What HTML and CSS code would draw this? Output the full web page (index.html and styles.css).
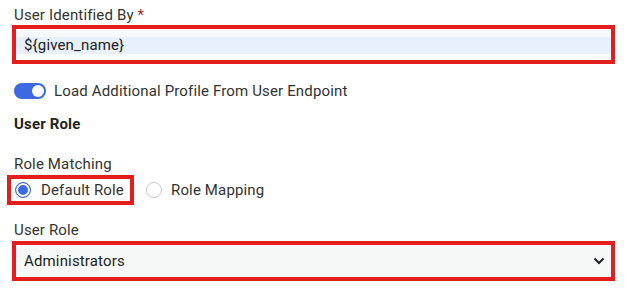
FILE: index.html
```html
<!DOCTYPE html>
<html>
<head>
<meta charset="utf-8">
<link rel="stylesheet" href="styles.css">
</head>
<body>
<div class="page">
  <div class="label">User Identified By <span class="req">*</span></div>
  <div class="hl box-input">
    <div class="input-top"></div>
    <div class="input-fill">${given_name}</div>
    <div class="input-bottom"></div>
  </div>

  <div class="toggle-row">
    <span class="toggle"><span class="knob"></span></span>
    <span>Load Additional Profile From User Endpoint</span>
  </div>

  <div class="section">User Role</div>

  <div class="label match-label">Role Matching</div>
  <div class="radio-row">
    <div class="hl radio-box">
      <span class="radio checked"></span>
      <span>Default Role</span>
    </div>
    <div class="radio-opt">
      <span class="radio"></span>
      <span>Role Mapping</span>
    </div>
  </div>

  <div class="label role-label">User Role</div>
  <div class="hl box-select">
    <span>Administrators</span>
    <svg class="chev" width="12" height="8" viewBox="0 0 12 8"><path d="M1.5 1.5 L6 6 L10.5 1.5" fill="none" stroke="#1f2328" stroke-width="2"/></svg>
  </div>
</div>
</body>
</html>
```
FILE: styles.css
```css
* { box-sizing: border-box; }
body {
  margin: 0;
  background: #fff;
  font-family: Roboto, "Noto Sans", sans-serif;
  font-size: 15px;
  line-height: 20px;
  letter-spacing: 0.15px;
  color: #333;
}
.page {
  padding: 5px 16px 0 14px;
  display: flex;
  flex-direction: column;
  align-items: flex-start;
}
.req { color: #a4262c; }
.hl { border: 4px solid #e41d1d; }
.box-input {
  align-self: stretch;
  margin-left: -2px;
  display: flex;
  flex-direction: column;
  height: 39px;
}
.input-top { height: 8px; background: #f6f8f9; }
.input-fill {
  height: 17px;
  background: #e8f0fe;
  padding-left: 8px;
  line-height: 16px;
  color: #222;
}
.input-bottom { height: 6px; background: #fbfcfc; }
.toggle-row {
  margin-top: 17px;
  display: flex;
  align-items: center;
  gap: 8px;
  height: 20px;
}
.toggle {
  width: 32px;
  height: 16px;
  border-radius: 8px;
  background: #3d6ae2;
  display: flex;
  justify-content: flex-end;
  align-items: center;
  padding: 0 2px;
}
.knob { width: 12px; height: 12px; border-radius: 50%; background: #fff; }
.section {
  margin-top: 13px;
  font-weight: 700;
  color: #222;
}
.match-label { margin-top: 20px; }
.radio-row {
  display: flex;
  align-items: center;
  margin-left: -7px;
  margin-top: 1px;
}
.radio-box {
  display: flex;
  align-items: center;
  gap: 10px;
  padding: 1px 4px 1px 4px;
  height: 30px;
  width: 127px;
}
.radio-opt {
  display: flex;
  align-items: center;
  gap: 9px;
  margin-left: 12px;
}
.radio {
  width: 16px;
  height: 16px;
  border-radius: 50%;
  border: 1px solid #c9cbce;
  background: #fff;
  flex: none;
}
.radio.checked {
  border: 1.5px solid #3d6ae2;
  box-shadow: inset 0 0 0 2px #fff;
  background: #3d6ae2;
}
.role-label { margin-top: 15px; }
.box-select {
  align-self: stretch;
  margin-left: -2px;
  margin-top: 1px;
  height: 40px;
  background: #f6f8f8;
  display: flex;
  align-items: center;
  justify-content: space-between;
  padding: 0 6px 0 8px;
  color: #222;
}
.chev { display: block; }
```
